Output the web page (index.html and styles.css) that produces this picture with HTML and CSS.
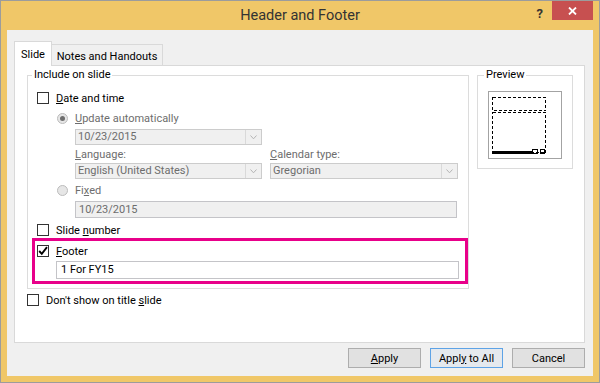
FILE: index.html
```html
<!DOCTYPE html>
<html>
<head>
<meta charset="utf-8">
<link rel="stylesheet" href="styles.css">
</head>
<body>
<div class="window">
  <div class="titlebar">
    <div></div>
    <div class="title">Header and Footer</div>
    <div class="controls">
      <span class="help">?</span>
      <span class="close"><svg width="9" height="8" viewBox="0 0 9 8"><path d="M1 0.5 L8 7.5 M8 0.5 L1 7.5" stroke="#fff" stroke-width="1.8"/></svg></span>
    </div>
  </div>
  <div class="client">
    <div class="tabs">
      <div class="tab active">Slide</div>
      <div class="tab">Notes and Handouts</div>
    </div>
    <div class="panel">
      <div class="panel-row">
        <div class="group include">
          <div class="group-label">Include on slide</div>
          <div class="row row-a"><span class="cb"></span><span><u>D</u>ate and time</span></div>
          <div class="row row-radio"><span class="radio on"></span><span class="dis"><u>U</u>pdate automatically</span></div>
          <div class="combo combo-date"><span class="val">10/23/2015</span><span class="arrow"><svg width="7" height="5" viewBox="0 0 7 5"><path d="M0.5 0.5 L3.5 3.8 L6.5 0.5" fill="none" stroke="#b4b4b4" stroke-width="1"/></svg></span></div>
          <div class="lang-grid">
            <span class="dis lbl"><u>L</u>anguage:</span>
            <span class="dis lbl"><u>C</u>alendar type:</span>
            <div class="combo"><span class="val">English (United States)</span><span class="arrow"><svg width="7" height="5" viewBox="0 0 7 5"><path d="M0.5 0.5 L3.5 3.8 L6.5 0.5" fill="none" stroke="#b4b4b4" stroke-width="1"/></svg></span></div>
            <div class="combo"><span class="val">Gregorian</span><span class="arrow"><svg width="7" height="5" viewBox="0 0 7 5"><path d="M0.5 0.5 L3.5 3.8 L6.5 0.5" fill="none" stroke="#b4b4b4" stroke-width="1"/></svg></span></div>
          </div>
          <div class="row row-radio row-fixed"><span class="radio"></span><span class="dis">Fi<u>x</u>ed</span></div>
          <div class="input input-fixed">10/23/2015</div>
          <div class="row row-slide"><span class="cb"></span><span>Slide <u>n</u>umber</span></div>
          <div class="highlight">
            <div class="row row-footer"><span class="cb checked"><svg width="10" height="10" viewBox="0 0 10 10"><path d="M1.2 5 L3.8 7.8 L9 1.2" fill="none" stroke="#000" stroke-width="1.9"/></svg></span><span><u>F</u>ooter</span></div>
            <div class="input input-footer">1 For FY15</div>
          </div>
        </div>
        <div class="group preview">
          <div class="group-label">Preview</div>
          <div class="preview-box">
            <svg width="72" height="66" viewBox="0 0 72 66" shape-rendering="crispEdges">
              <rect x="3.5" y="5.5" width="53" height="13" fill="none" stroke="#000" stroke-width="1" stroke-dasharray="3 2"/>
              <rect x="3.5" y="20.5" width="53" height="40" fill="none" stroke="#000" stroke-width="1" stroke-dasharray="3 2"/>
              <rect x="3" y="59" width="40" height="3" fill="#000"/>
              <rect x="43.5" y="57.5" width="5" height="4" fill="none" stroke="#000" stroke-width="1"/>
              <rect x="51.5" y="57.5" width="4" height="4" fill="none" stroke="#000" stroke-width="1"/>
            </svg>
          </div>
        </div>
      </div>
      <div class="row row-dont"><span class="cb"></span><span>Don't show on title <u>s</u>lide</span></div>
    </div>
    <div class="buttons">
      <button class="btn"><u>A</u>pply</button>
      <button class="btn default">Appl<u>y</u> to All</button>
      <button class="btn">Cancel</button>
    </div>
  </div>
</div>
</body>
</html>
```
FILE: styles.css
```css
* { box-sizing: border-box; }
html, body { margin: 0; padding: 0; }
body {
  font-family: Roboto, "Liberation Sans", sans-serif;
  font-size: 11px;
  color: #000;
}
u { text-underline-offset: 1px; }

.window {
  width: 600px;
  height: 383px;
  background: #f0c768;
  border: 1px solid #9c9c9c;
  display: flex;
  flex-direction: column;
}

.titlebar {
  height: 29px;
  display: grid;
  grid-template-columns: 1fr auto 1fr;
  align-items: center;
}
.title {
  font-size: 14.5px;
  color: #333;
  line-height: 29px;
}
.controls {
  align-self: start;
  display: flex;
  justify-content: flex-end;
  align-items: flex-start;
  padding-right: 6px;
}
.help {
  font-size: 13px;
  font-weight: bold;
  color: #333;
  line-height: 15px;
  margin-top: 5px;
  margin-right: 9px;
}
.close {
  width: 41px;
  height: 19px;
  background: #c75050;
  display: flex;
  align-items: center;
  justify-content: center;
}

.client {
  flex: 1;
  margin: 0 6px 6px;
  background: #f0f0f0;
  padding: 11px 8px 0 7px;
  display: flex;
  flex-direction: column;
}

.tabs {
  height: 24px;
  display: flex;
  align-items: flex-end;
}
.tab {
  border: 1px solid #d9d9d9;
  border-bottom: none;
  display: flex;
  align-items: center;
  justify-content: center;
}
.tab.active {
  width: 38px;
  height: 25px;
  margin-bottom: -1px;
  background: #fff;
  position: relative;
  z-index: 1;
}
.tab:not(.active) {
  width: 111px;
  height: 21px;
  border-left: none;
  background: #f0f0f0;
  padding-top: 2px;
}

.panel {
  height: 278px;
  background: #fff;
  border: 1px solid #d9d9d9;
  padding: 9px 0 0 12px;
}
.panel-row {
  display: flex;
  align-items: flex-start;
  gap: 8px;
}

.group {
  border: 1px solid #dcdcdc;
}
.group-label {
  width: fit-content;
  height: 16px;
  line-height: 16px;
  margin-top: -9px;
  padding: 0 2px;
  background: #fff;
}
.include {
  width: 442px;
  padding: 0 9px 4px 9px;
}
.include > .group-label { margin-left: -5px; }
.preview {
  width: 96px;
  padding: 0 0 9px 10px;
}
.preview > .group-label { margin-left: -4px; }
.preview-box {
  margin-top: 8px;
  width: 74px;
  height: 68px;
  border: 1px solid #a3a3a3;
  background: #fff;
}
.preview-box svg { display: block; }

.row {
  display: flex;
  align-items: center;
  height: 16px;
  gap: 7px;
}
.row-a { margin-top: 7px; }
.row-radio { margin-top: 4px; padding-left: 20px; }
.row-fixed { margin-top: 3px; }
.row-slide { margin-top: 5px; height: 14px; }
.row-dont { margin-top: 3px; }

.cb {
  width: 12px;
  height: 12px;
  border: 1px solid #333;
  background: #fff;
  flex: none;
  display: flex;
  align-items: center;
  justify-content: center;
}
.radio {
  width: 11px;
  height: 11px;
  border-radius: 50%;
  border: 1px solid #bcbcbc;
  background: #e6e6e6;
  flex: none;
  display: flex;
  align-items: center;
  justify-content: center;
}
.radio.on::after {
  content: "";
  width: 5px;
  height: 5px;
  border-radius: 50%;
  background: #6e6e6e;
}
.dis { color: #6d6d6d; }

.combo {
  height: 16px;
  border: 1px solid #cccccc;
  background: #f0f0f0;
  display: flex;
  color: #6d6d6d;
}
.combo .val {
  flex: 1;
  padding-left: 2px;
  line-height: 14px;
  white-space: nowrap;
}
.combo .arrow {
  width: 16px;
  border-left: 1px solid #d9d9d9;
  display: flex;
  align-items: center;
  justify-content: center;
}
.combo-date {
  margin-top: 3px;
  margin-left: 38px;
  width: 187px;
}
.lang-grid {
  margin-top: 2px;
  margin-left: 38px;
  display: grid;
  grid-template-columns: 187px 188px;
  grid-template-rows: 16px 16px;
  column-gap: 8px;
}
.lbl { line-height: 16px; }

.input {
  border: 1px solid #c4c4c8;
  padding-left: 3px;
  white-space: nowrap;
}
.input-fixed {
  margin-top: 3px;
  margin-left: 38px;
  width: 382px;
  height: 17px;
  line-height: 15px;
  background: #f0f0f0;
  color: #6d6d6d;
}
.highlight {
  margin: 1px -9px 0 -5px;
  border: 3px solid #e8008a;
  padding: 2px 6px 2px 2px;
}
.input-footer {
  margin-top: 2px;
  margin-left: 19px;
  height: 18px;
  line-height: 16px;
  background: #fff;
  padding-left: 4px;
}

.buttons {
  margin-top: 5px;
  display: flex;
  justify-content: flex-end;
  gap: 9px;
}
.btn {
  width: 73px;
  height: 20px;
  border: 1px solid #adadad;
  background: #e1e1e1;
  font-family: Roboto, "Liberation Sans", sans-serif;
  font-size: 11px;
  color: #000;
  padding: 0;
  margin: 0;
}
.btn.default {
  border-color: #5ea3e6;
  background: #e5e9ee;
}
```
